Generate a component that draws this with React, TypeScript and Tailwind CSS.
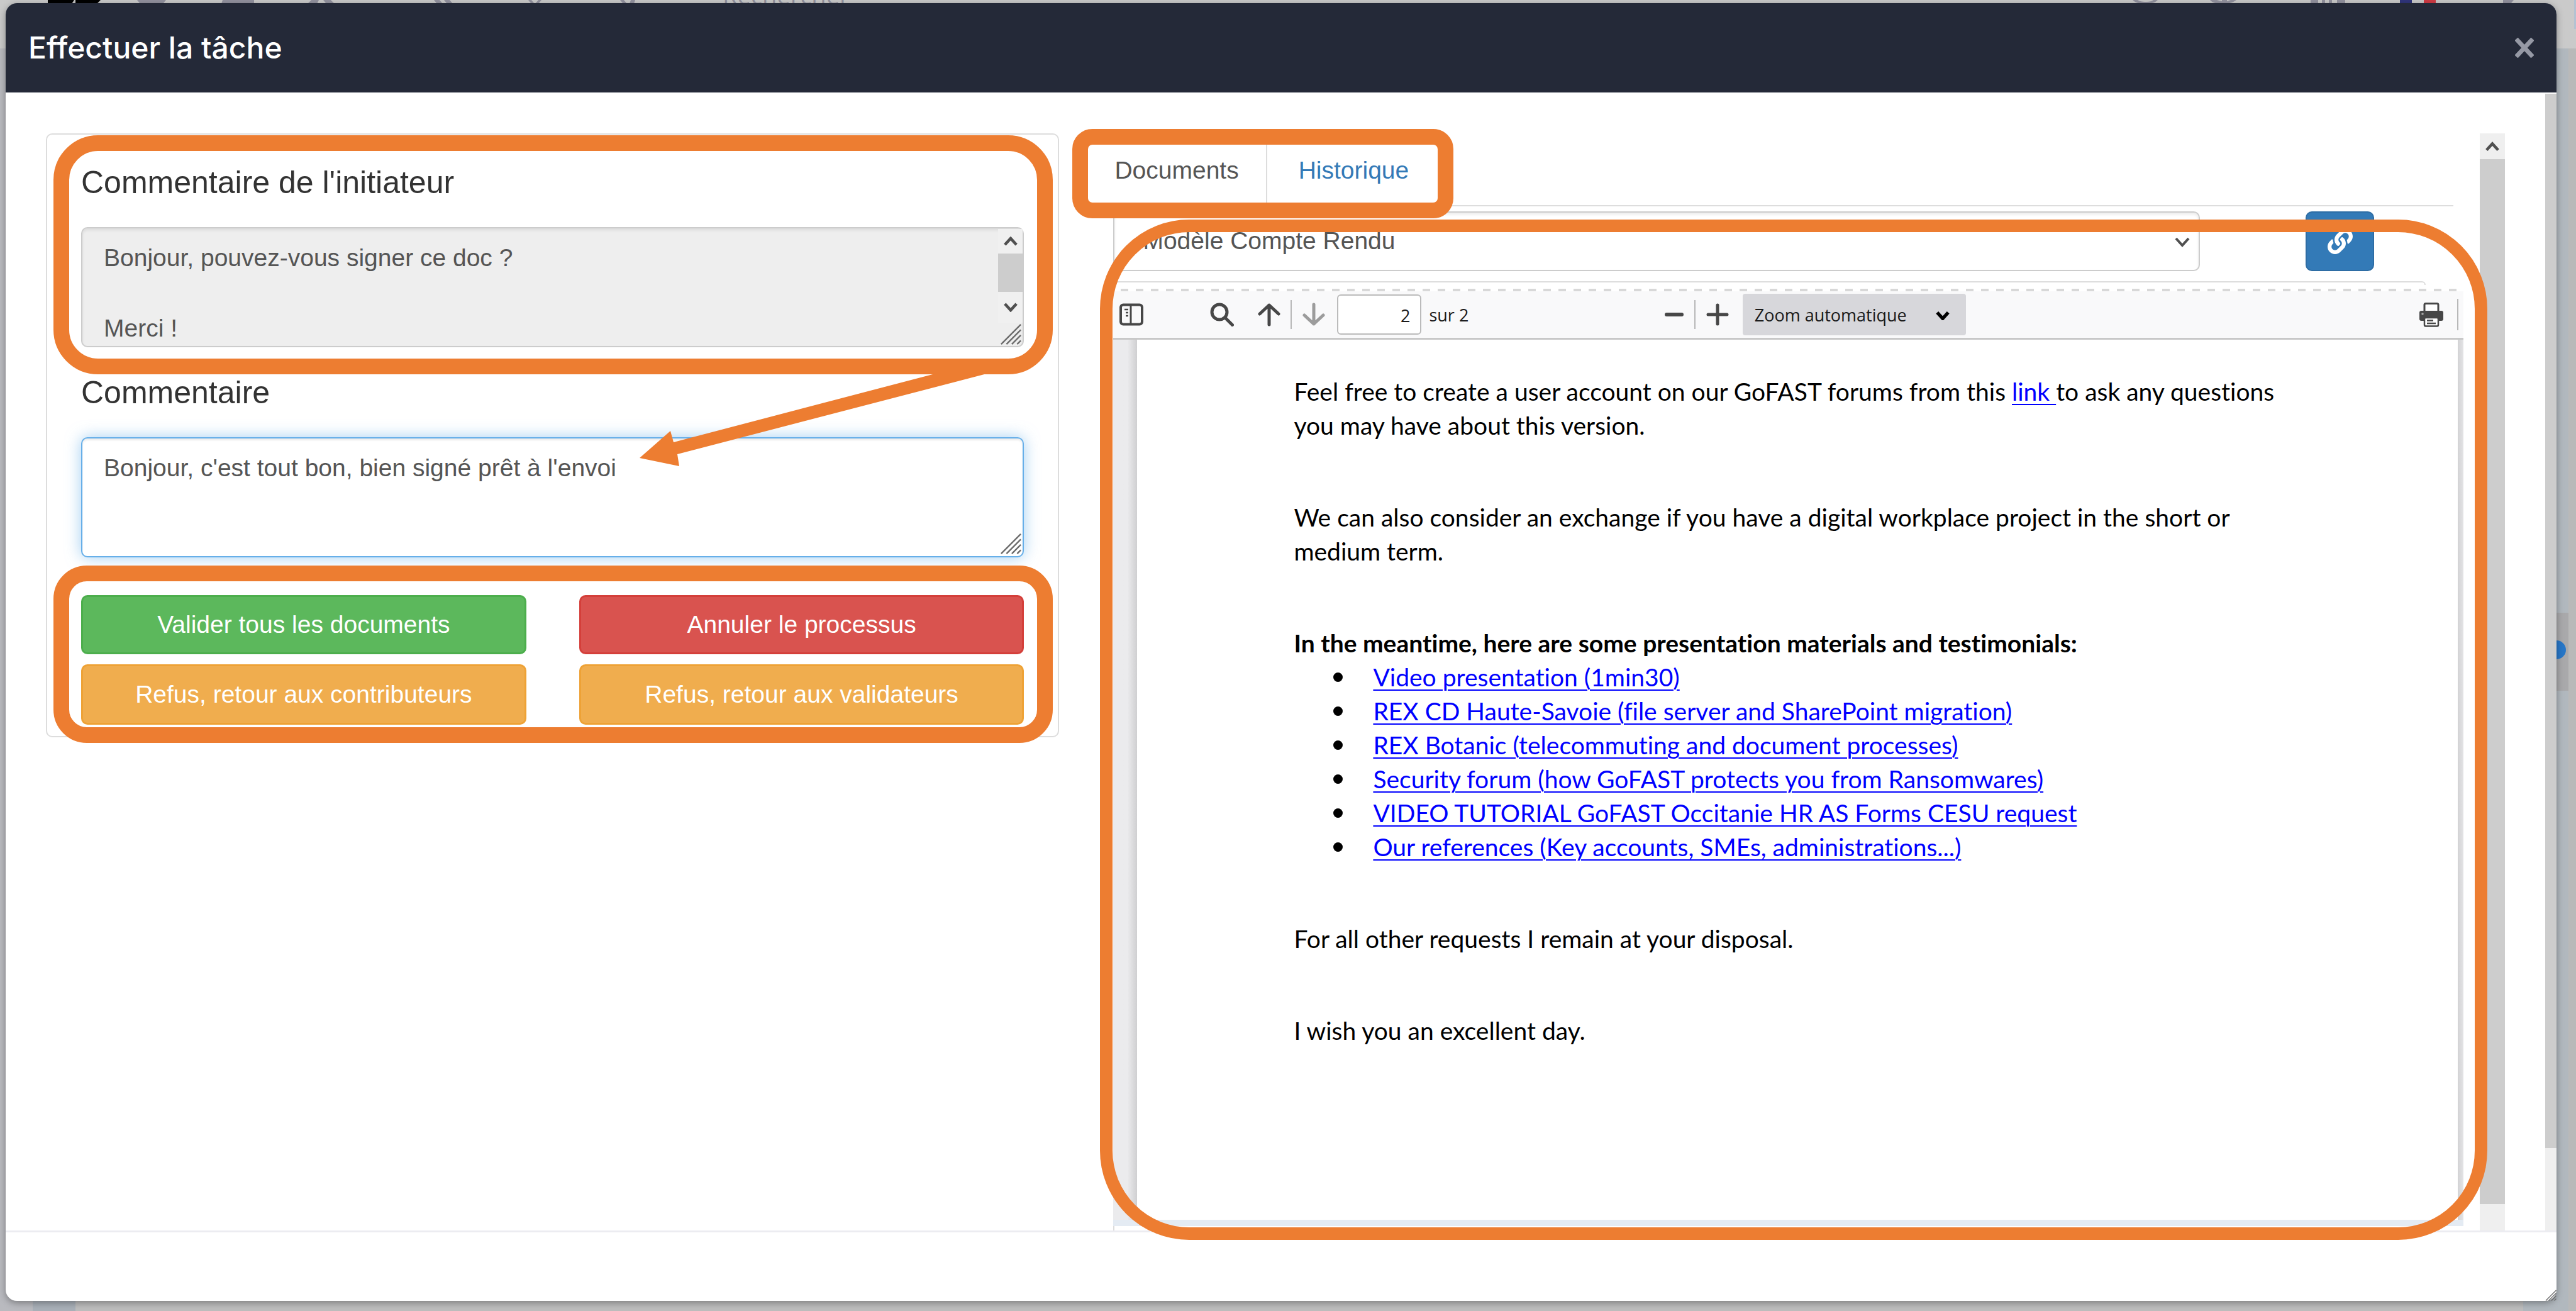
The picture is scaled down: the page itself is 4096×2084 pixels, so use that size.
import React from "react";
import { FaLink } from "react-icons/fa";

const links = [
  "Video presentation (1min30)",
  "REX CD Haute-Savoie (file server and SharePoint migration)",
  "REX Botanic (telecommuting and document processes)",
  "Security forum (how GoFAST protects you from Ransomwares)",
  "VIDEO TUTORIAL GoFAST Occitanie HR AS Forms CESU request",
  "Our references (Key accounts, SMEs, administrations...)",
];

function Highlight({ className }: { className: string }) {
  return <div aria-hidden className={`pointer-events-none absolute z-10 border-[#ed7d31] ${className}`} />;
}

function ResizeGrip({ className }: { className: string }) {
  return (
    <svg aria-hidden className={className} viewBox="0 0 36 36" fill="none" stroke="#6b6b6b" strokeWidth="2.5">
      <path d="M2 35 35 2M11 35 35 11M20 35 35 20M29 35 35 29" />
    </svg>
  );
}

function Chevron({ className, up, stroke = "#505050", width = 5 }: { className: string; up?: boolean; stroke?: string; width?: number }) {
  return (
    <svg aria-hidden className={className} viewBox="0 0 24 16" fill="none" stroke={stroke} strokeWidth={width}>
      <path d={up ? "M2 14 12 3 22 14" : "M2 2 12 13 22 2"} />
    </svg>
  );
}

function Backdrop() {
  return (
    <div aria-hidden className="absolute inset-0 overflow-hidden bg-[#bdbdbd]">
      <div className="absolute inset-x-0 top-0 h-[77px] bg-[#cacaca]" />
      <div className="absolute bottom-0 left-0 top-[77px] w-[52px] bg-[#b9babf]" />
      <div className="absolute bottom-0 left-[52px] h-[20px] w-[68px] bg-[#a9b0b8]" />
      <div className="absolute bottom-0 right-[12px] top-[77px] w-[72px] bg-[#b1b8be]" />
      <div className="absolute bottom-0 right-0 top-[77px] w-[12px] bg-[#b9b9b9]" />
      <div className="absolute right-0 top-0 h-[46px] w-[3px] bg-[#b4c2d2]" />
      <div className="absolute right-[12px] top-[974px] h-[124px] w-[40px] bg-[#a9a9ab]" />
      <div className="absolute right-[16px] top-[1018px] h-[30px] w-[30px] rounded-full bg-[#2777c8]" />
      <svg className="absolute left-0 top-0 h-[6px] w-[1160px]" viewBox="0 0 1160 6">
        <path d="M76 0h42l-4 6H76zM120 0h40l-6 6h-34z" fill="#000" />
        <path d="M218 0h46l-5 6h-36zM354 0h50v6h-52zM495 0h12l-3 6h-15zM514 0h12l6 6h-13zM690 0h9l5 6h-9zM706 0h9l5 6h-9zM840 0h5l5 6h-5zM856 0h5l-5 6h-5zM986 0h6l5 6h-6zM1003 0h7l-2 6h-7z" fill="#93929f" />
      </svg>
      <span className="absolute left-[1149px] -top-[30px] font-['Open_Sans',sans-serif] text-[38px] leading-[44px] text-[#93929f]">Rechercher</span>
      <svg className="absolute right-0 top-0 h-[6px] w-[736px]" viewBox="0 0 736 6">
        <path d="M31 0q6 6 18 6h4q12 0 18-6h-7q-4 3-11 3h-2q-7 0-12-3zM154 0q5 6 18 6h4q12 0 20-6h-9l-6 2V0h-8v2l-8-2zM314 0h12v6h-12zM332 0h5v6h-5zM343 0h5v6h-5zM356 0h13v6h-13zM620 0h17l-5 6h-12z" fill="#93929f" />
        <path d="M456 0h19v6h-19z" fill="#30357c" />
        <path d="M494 0h19v6h-19z" fill="#cf3a44" />
      </svg>
    </div>
  );
}

function TaskForm() {
  const area =
    "block h-[191px] w-full resize-none overflow-hidden rounded-[10px] border-2 px-[34px] pt-[19px] text-[39px] leading-[56px] text-[#555]";
  const button = "w-full rounded-[10px] border-[3px] text-[39px] leading-[56px] text-white";
  return (
    <form className="self-start rounded-[10px] border-2 border-[#ddd] px-[54px] pb-[18px] pt-[48px]">
      <section className="relative">
        <label htmlFor="initiator" className="block text-[50px] leading-[56px] text-[#333]">
          Commentaire de l'initiateur
        </label>
        <div className="relative mt-[43px]">
          <textarea
            id="initiator"
            readOnly
            defaultValue={"Bonjour, pouvez-vous signer ce doc ?\n\nMerci !"}
            className={`${area} border-[#ccc] bg-[#eee] shadow-[inset_0_3px_4px_rgba(0,0,0,0.08)]`}
          />
          <div aria-hidden className="absolute bottom-[2px] right-[2px] top-[3px] flex w-[39px] flex-col items-center">
            <div className="flex h-[39px] w-full items-center justify-center bg-[#f0f0f0]">
              <Chevron up className="h-[15px] w-[22px]" />
            </div>
            <div className="h-[61px] w-full bg-[#cdcdcd]" />
            <div className="flex h-[49px] w-full items-center justify-center bg-[#f0f0f0]">
              <Chevron className="h-[15px] w-[22px]" />
            </div>
            <ResizeGrip className="h-[36px] w-[34px]" />
          </div>
        </div>
        <Highlight className="-bottom-[43px] -left-[44px] -right-[46px] -top-[47px] rounded-[71px] border-[25px]" />
        <svg aria-hidden className="pointer-events-none absolute left-[888px] top-[332px] z-10 h-[148px] w-[552px]" viewBox="0 0 552 148">
          <path d="M0 134 49 91 54 109 470 0H552L60 128 63 147Z" fill="#ed7d31" />
        </svg>
      </section>
      <section className="mt-[44px]">
        <label htmlFor="comment" className="block text-[50px] leading-[56px] text-[#333]">
          Commentaire
        </label>
        <div className="relative mt-[43px]">
          <textarea
            id="comment"
            defaultValue="Bonjour, c'est tout bon, bien signé prêt à l'envoi"
            className={`${area} border-[#66afe9] bg-white shadow-[inset_0_3px_3px_rgba(0,0,0,0.075),0_0_24px_rgba(102,175,233,0.6)]`}
          />
          <ResizeGrip className="absolute bottom-[4px] right-[4px] h-[36px] w-[34px]" />
        </div>
      </section>
      <div className="relative mt-[60px] grid grid-cols-2 gap-x-[84px] gap-y-[16px]">
        <button type="button" className={`${button} h-[94px] border-[#4cae4c] bg-[#5cb85c]`}>Valider tous les documents</button>
        <button type="button" className={`${button} h-[94px] border-[#d43f3a] bg-[#d9534f]`}>Annuler le processus</button>
        <button type="button" className={`${button} h-[96px] border-[#eea236] bg-[#f0ad4e]`}>Refus, retour aux contributeurs</button>
        <button type="button" className={`${button} h-[96px] border-[#eea236] bg-[#f0ad4e]`}>Refus, retour aux validateurs</button>
        <Highlight className="-bottom-[29px] -left-[44px] -right-[46px] -top-[47px] rounded-[53px] border-[25px]" />
      </div>
    </form>
  );
}

function PdfToolbar() {
  const sep = "h-[46px] w-[2px] bg-[#b8b8b8]";
  return (
    <div className="grid h-[77px] grid-cols-[1fr_auto_1fr] items-center border-b-[3px] border-[#c8c8c8] bg-[#f9f9fa] font-['Open_Sans',sans-serif] text-[27px] text-[#1a1a1a]">
      <div className="flex items-center pl-[10px]">
        <button type="button" aria-label="Afficher le panneau latéral">
          <svg className="h-[36px] w-[38px]" viewBox="0 0 38 36" fill="none" stroke="#474747">
            <rect x="2" y="2.500" width="34" height="31" rx="4" strokeWidth="4" />
            <path d="M18 4v28" strokeWidth="3" />
            <path d="M8 10h6M10 15h4M10 20h4" strokeWidth="2.500" />
          </svg>
        </button>
        <button type="button" aria-label="Rechercher" className="ml-[106px]">
          <svg className="h-[38px] w-[38px]" viewBox="0 0 38 38" fill="none" stroke="#474747" strokeWidth="5" strokeLinecap="round">
            <circle cx="15" cy="15" r="12" />
            <path d="M24 24 35.500 35.500" />
          </svg>
        </button>
        <button type="button" aria-label="Page précédente" className="ml-[38px]">
          <svg className="h-[38px] w-[36px]" viewBox="0 0 36 38" fill="none" stroke="#474747" strokeWidth="5" strokeLinecap="round" strokeLinejoin="round">
            <path d="M18 35V4M3 18 18 4 33 18" />
          </svg>
        </button>
        <span className={`${sep} ml-[16px]`} />
        <button type="button" aria-label="Page suivante" className="ml-[17px]">
          <svg className="h-[38px] w-[36px]" viewBox="0 0 36 38" fill="none" stroke="#9c9c9c" strokeWidth="5" strokeLinecap="round" strokeLinejoin="round">
            <path d="M18 3V34M3 20 18 34 33 20" />
          </svg>
        </button>
        <input
          id="page"
          aria-label="Page"
          defaultValue="2"
          className="ml-[19px] h-[64px] w-[134px] rounded-[6px] border-2 border-[#bbb] bg-white pr-[16px] pt-[2px] text-right"
        />
        <label htmlFor="page" className="ml-[12px] pt-[2px]">sur 2</label>
      </div>
      <div className="flex items-center pl-[85px]">
        <button type="button" aria-label="Zoom arrière">
          <svg className="h-[36px] w-[30px]" viewBox="0 0 30 36" stroke="#474747" strokeWidth="6" strokeLinecap="round">
            <path d="M3 18h24" />
          </svg>
        </button>
        <span className={`${sep} ml-[17px]`} />
        <button type="button" aria-label="Zoom avant" className="ml-[17px]">
          <svg className="h-[36px] w-[36px]" viewBox="0 0 36 36" stroke="#474747" strokeWidth="5" strokeLinecap="round">
            <path d="M3 18h30M18 3v30" />
          </svg>
        </button>
        <div className="relative ml-[22px]">
          <select aria-label="Zoom" className="block h-[66px] w-[355px] appearance-none rounded-[4px] bg-[#d7d7db] pl-[19px] pt-[2px]">
            <option>Zoom automatique</option>
          </select>
          <Chevron className="pointer-events-none absolute right-[26px] top-[28px] h-[14px] w-[22px]" stroke="#000" width={6} />
        </div>
      </div>
      <div className="flex items-center justify-end pr-[8px]">
        <button type="button" aria-label="Imprimer">
          <svg className="h-[39px] w-[38px]" viewBox="0 0 38 39">
            <rect x="8" y="1.500" width="22" height="16" rx="2" fill="#fff" stroke="#474747" strokeWidth="3" />
            <rect x="0" y="13" width="38" height="16" rx="3" fill="#474747" />
            <circle cx="5" cy="18" r="1.800" fill="#aaa" />
            <rect x="8" y="24" width="22" height="13.500" rx="2" fill="#fff" stroke="#474747" strokeWidth="2.500" />
            <path d="M12 28.500h10M12 33h14" stroke="#474747" strokeWidth="2.500" />
          </svg>
        </button>
        <span className="ml-[22px] h-[50px] w-[2px] bg-[#b8b8b8]" />
      </div>
    </div>
  );
}

function PdfPage() {
  return (
    <div className="flex min-h-0 flex-1">
      <div className="w-[38px] bg-linear-to-r from-[#ebebed] from-60% to-[#cfcfd1]" />
      <article className="flex-1 bg-white pl-[249px] pr-[240px] pt-[55px] font-['Lato',sans-serif] text-[39px] leading-[54px] text-black [font-variant-ligatures:none]">
        <p>
          Feel free to create a user account on our GoFAST forums from this{" "}
          <a href="#forum" className="text-[#00f] underline decoration-2 underline-offset-[5px]">link </a>to ask any questions
          <br />
          you may have about this version.
        </p>
        <p className="mt-[92px]">
          We can also consider an exchange if you have a digital workplace project in the short or
          <br />
          medium term.
        </p>
        <p className="mt-[92px] font-bold">In the meantime, here are some presentation materials and testimonials:</p>
        <ul>
          {links.map((text) => (
            <li key={text} className="flex items-center pl-[63px]">
              <span className="mr-[48px] h-[15px] w-[15px] rounded-full bg-black" />
              <a href="#doc" className="text-[#00f] underline decoration-2 underline-offset-[5px]">{text}</a>
            </li>
          ))}
        </ul>
        <p className="mt-[92px]">For all other requests I remain at your disposal.</p>
        <p className="mt-[92px]">I wish you an excellent day.</p>
      </article>
      <div className="w-[9px] bg-linear-to-r from-[#d2d2d4] to-[#e4e4e6]" />
    </div>
  );
}

function DocumentsPane() {
  return (
    <div className="relative flex min-h-0">
      <div className="flex min-h-0 flex-1 flex-col">
        <nav className="mr-[42px] flex border-b-2 border-[#ddd] text-[39px]">
          <div className="relative flex h-[114px] items-stretch leading-[118px]">
            <a href="#documents" className="border-r-2 border-[#ddd] pl-[23px] pr-[43px] text-[#555]">Documents</a>
            <a href="#historique" className="pl-[50px] pr-[44px] text-[#337ab7]">Historique</a>
            <Highlight className="-left-[44px] -top-[7px] h-[142px] w-[606px] rounded-[32px] border-[25px]" />
          </div>
        </nav>
        <div className="ml-[21px] mr-[26px] flex min-h-0 flex-1 flex-col">
          <div className="mt-[8px] flex h-[95px] items-stretch">
            <div className="relative flex-1">
              <select
                aria-label="Document"
                className="block h-full w-full appearance-none rounded-[10px] border-2 border-[#ccc] bg-white pl-[45px] text-[39px] text-[#555] shadow-[inset_0_3px_4px_rgba(0,0,0,0.08)]"
              >
                <option>Modèle Compte Rendu</option>
              </select>
              <Chevron className="pointer-events-none absolute right-[16px] top-[41px] h-[16px] w-[24px]" width={4} />
            </div>
            <button type="button" aria-label="Lien" className="ml-[168px] mr-[142px] flex w-[109px] items-center justify-center rounded-[10px] border-2 border-[#2e6da4] bg-[#337ab7] text-white">
              <FaLink className="h-[40px] w-[40px]" />
            </button>
          </div>
          <div className="mr-[60px] mt-[16px] h-[6px] rounded-tr-[10px] border-r-2 border-t-2 border-[#ddd]" />
          <div className="mt-[6px] h-[4px] bg-[repeating-linear-gradient(90deg,transparent_0,transparent_12px,#d8d8d8_12px,#d8d8d8_24px)]" />
          <PdfToolbar />
          <PdfPage />
          <div className="h-[10px] bg-[#e4ebf3]" />
          <div className="h-[7px] border-l-2 border-[#ddd]" />
        </div>
      </div>
      <div aria-hidden className="flex w-[40px] flex-col bg-[#efefef]">
        <div className="flex h-[41px] items-center justify-center">
          <Chevron up className="h-[16px] w-[22px]" />
        </div>
        <div className="mb-[42px] flex-1 bg-[#cdcdcd]" />
      </div>
      <Highlight className="-bottom-[15px] -right-[-28px] left-0 top-[137px] rounded-[142px] border-[20px]" />
    </div>
  );
}

export default function App() {
  return (
    <div className="relative flex h-screen w-full pb-[16px] pl-[9px] pr-[31px] pt-[5px] font-['Liberation_Sans',sans-serif]">
      <Backdrop />
      <div role="dialog" aria-labelledby="title" className="relative flex flex-1 flex-col rounded-[18px] bg-white shadow-[0_3px_12px_rgba(0,0,0,0.35)]">
        <header className="flex h-[142px] items-center justify-between rounded-t-[18px] bg-[#242938] pl-[36px] pr-[36px]">
          <h1 id="title" className="font-['Inter',sans-serif] text-[48px] font-medium leading-[56px] text-white">Effectuer la tâche</h1>
          <button type="button" aria-label="Fermer">
            <svg className="h-[32px] w-[30px]" viewBox="0 0 30 32" stroke="#9699a5" strokeWidth="7">
              <path d="M2 2 28 30M28 2 2 30" />
            </svg>
          </button>
        </header>
        <div className="flex min-h-0 flex-1">
          <main className="grid min-h-0 flex-1 grid-cols-[1611fr_2233fr] grid-rows-[minmax(0,1fr)] gap-[65px] px-[64px] pt-[65px]">
            <TaskForm />
            <DocumentsPane />
          </main>
          <div aria-hidden className="mt-[2px] flex w-[18px] flex-col bg-[#efefef]">
            <div className="mb-[131px] flex-1 bg-[#cdcdcd]" />
          </div>
        </div>
        <footer className="h-[112px] border-t-[3px] border-[#ececf1]" />
        <ResizeGrip className="absolute bottom-0 right-0 h-[18px] w-[18px]" />
      </div>
    </div>
  );
}
